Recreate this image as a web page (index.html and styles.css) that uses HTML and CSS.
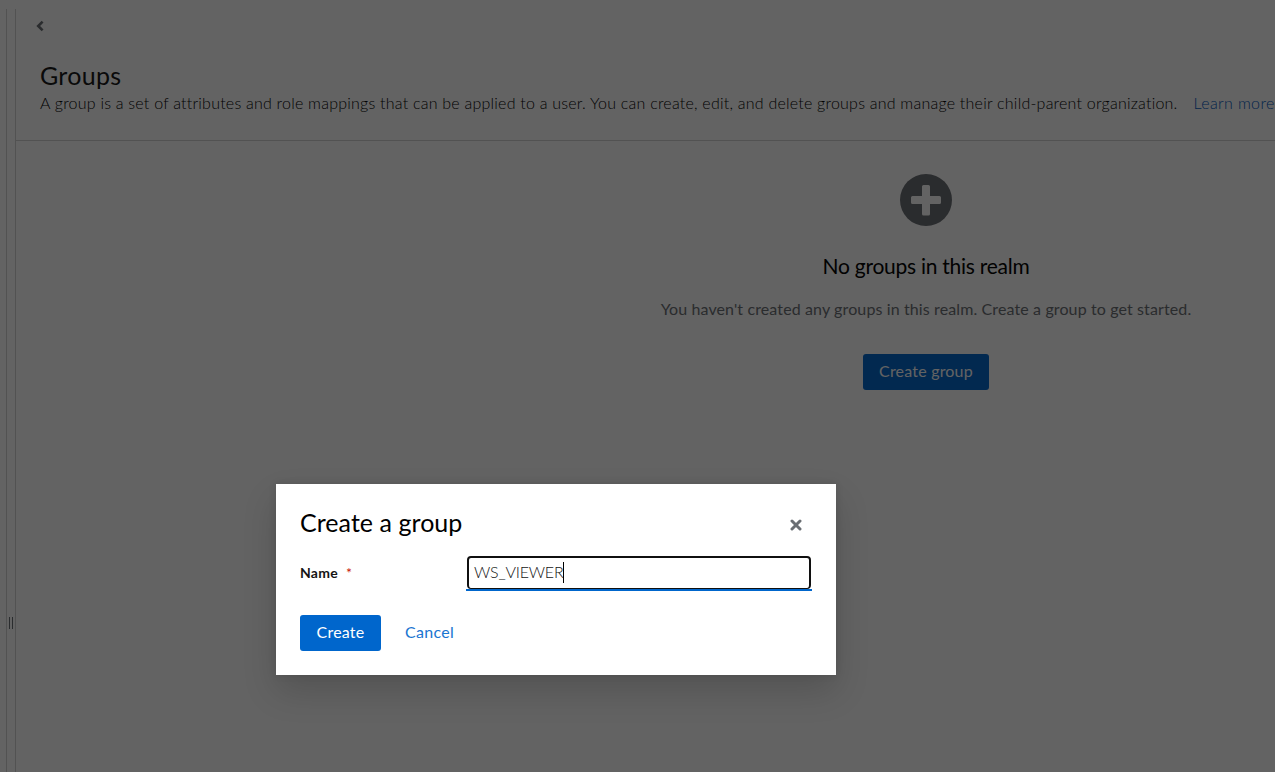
FILE: index.html
```html
<!DOCTYPE html>
<html lang="en">
<head>
<meta charset="utf-8">
<title>Groups</title>
<link rel="stylesheet" href="styles.css">
</head>
<body>
<div class="page">
  <div class="splitter"><span class="grip"></span></div>
  <main class="panel">
    <header class="header">
      <svg class="back" viewBox="0 0 8 12"><path d="M6.6 1.6 2.2 6l4.4 4.4" fill="none" stroke="#6a6e73" stroke-width="2.6"/></svg>
      <h1 class="title">Groups</h1>
      <p class="description"><span>A group is a set of attributes and role mappings that can be applied to a user. You can create, edit, and delete groups and manage their child-parent organization.</span><a class="learn">Learn more</a></p>
    </header>
    <section class="empty">
      <svg class="plus" viewBox="0 0 52 52"><circle cx="26" cy="26" r="26" fill="#6a6e73"/><path d="M23.5 11h5q1.5 0 1.5 1.500V22h9.500q1.500 0 1.500 1.500v5q0 1.500-1.500 1.500H30v10q0 1.500-1.500 1.500h-5q-1.500 0-1.500-1.500V30H12.500q-1.500 0-1.500-1.500v-5q0-1.500 1.500-1.500H22v-9.500q0-1.500 1.500-1.500z" fill="#fff"/></svg>
      <h2 class="empty-title">No groups in this realm</h2>
      <p class="empty-text">You haven't created any groups in this realm. Create a group to get started.</p>
      <button class="button">Create group</button>
    </section>
  </main>
</div>
<div class="backdrop"></div>
<div class="modal">
  <div class="modal-head">
    <h2 class="modal-title">Create a group</h2>
    <svg class="close" viewBox="0 0 12 12"><path d="M2 2l8 8M10 2l-8 8" stroke="#6a6e73" stroke-width="3" stroke-linecap="round"/></svg>
  </div>
  <div class="field">
    <label class="label"><span>Name</span><span class="required">*</span></label>
    <div class="input"><span class="value">WS_VIEWER</span><span class="caret"></span></div>
  </div>
  <div class="actions">
    <button class="button create">Create</button>
    <a class="cancel">Cancel</a>
  </div>
</div>
</body>
</html>
```
FILE: styles.css
```css
* { box-sizing: border-box; }
body { margin: 0; width: 1275px; height: 772px; overflow: hidden; background: #fff; color: #151515; font-family: Lato, "Liberation Sans", sans-serif; font-size: 16px; line-height: 24px; font-variant-ligatures: none; }
h1, h2, p { margin: 0; font-weight: 400; white-space: nowrap; }
.page { display: flex; height: 772px; padding: 9px 0 0 6px; }
.splitter { width: 10px; flex: none; border: solid #d2d2d2; border-width: 0 1px; padding: 608px 0 0 2px; }
.grip { display: block; width: 4px; height: 12px; border: solid #6a6e73; border-width: 0 1px; }
.panel { flex: 1; min-width: 0; }
.header { height: 132px; padding: 11px 0 0 24px; border-bottom: 1px solid #d2d2d2; }
.back { display: block; width: 8px; height: 12px; margin-left: -4px; }
.title { margin-top: 28px; font-size: 25px; line-height: 31px; letter-spacing: .3px; }
.description { display: flex; gap: 16px; font-weight: 300; letter-spacing: .226px; color: #000; }
.learn { color: #0058c0; letter-spacing: .35px; }
.empty { width: 560px; margin: 33px 0 0 630px; display: flex; flex-direction: column; align-items: center; }
.plus { width: 52px; height: 52px; }
.empty-title { margin-top: 25px; font-size: 21px; line-height: 30px; letter-spacing: -.26px; color: #000; }
.empty-text { margin-top: 16px; letter-spacing: .118px; color: #6a6e73; }
.button { height: 36px; padding: 0 0 2px; border: 0; border-radius: 3px; background: #06c; color: #fff; font: inherit; letter-spacing: .2px; }
.empty .button { width: 126px; margin-top: 33px; }
.backdrop { position: absolute; inset: 0; background: rgba(3, 3, 3, .62); }
.modal { position: absolute; left: 276px; top: 484px; width: 560px; height: 191px; padding: 24px; background: #fff; box-shadow: 0 16px 32px rgba(3, 3, 3, .16), 0 0 8px rgba(3, 3, 3, .1); }
.modal-head { display: flex; justify-content: space-between; padding-right: 10px; height: 31px; align-items: center; }
.modal-title { margin-top: -2px; font-size: 25px; line-height: 31px; letter-spacing: .05px; color: #000; }
.close { width: 12px; height: 12px; margin-top: 3px; }
.field { display: flex; margin-top: 16px; height: 36px; }
.label { width: 166px; display: flex; gap: 8px; line-height: 36px; font-size: 14px; font-weight: 700; letter-spacing: .25px; }
.required { color: #c9190b; font-weight: 400; }
.input { width: 346px; height: 36px; border-bottom: 2px solid #06c; position: relative; display: flex; align-items: center; padding-left: 8px; color: #151515; font-weight: 300; }
.value { letter-spacing: -.2px; }
.input::before { content: ""; position: absolute; inset: 1px 1px 0; border: 2px solid #101010; border-bottom-width: 1px; border-radius: 4px; }
.caret { width: 1px; height: 21px; background: #000; }
.actions { display: flex; gap: 24px; margin-top: 24px; align-items: center; }
.create { width: 81px; }
.cancel { margin-top: -2px; letter-spacing: .3px; color: #1a75d1; }
```
